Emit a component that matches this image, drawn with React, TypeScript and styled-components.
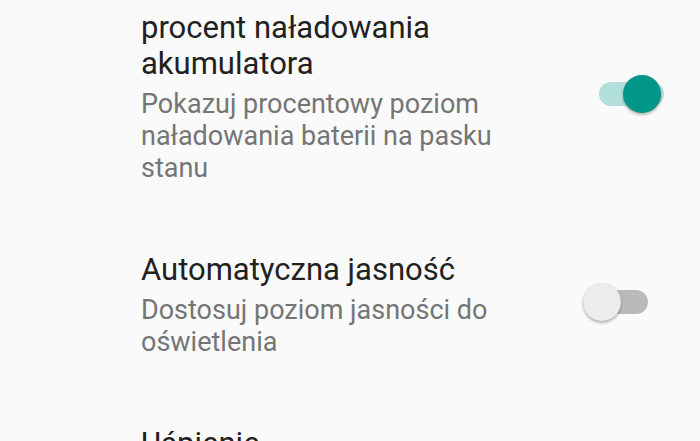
import styled, { createGlobalStyle } from "styled-components";

const GlobalStyle = createGlobalStyle`
  html, body {
    margin: 0;
    padding: 0;
    background: #fafafa;
    overflow: hidden;
  }
  body {
    font-family: Roboto, "Noto Sans", sans-serif;
  }
`;

const Screen = styled.div`
  width: 700px;
  height: 441px;
  overflow: hidden;
  background: #fafafa;
`;

const List = styled.div`
  display: flex;
  flex-direction: column;
  margin-top: -24px;
`;

const Item = styled.div`
  display: flex;
  align-items: center;
  gap: 24px;
  padding: 34px 36px 34px 141px;
`;

const Texts = styled.div`
  flex: 1;
  display: flex;
  flex-direction: column;
  gap: 6px;
`;

const Title = styled.div`
  font-size: 31px;
  line-height: 36px;
  color: #212121;
`;

const Summary = styled.div`
  font-size: 27px;
  line-height: 32px;
  color: #757575;
  max-width: 370px;
`;

const SwitchBox = styled.div`
  position: relative;
  width: 81px;
  height: 38px;
  margin-bottom: 6px;
  flex-shrink: 0;
`;

const Track = styled.div<{ $on: boolean }>`
  position: absolute;
  top: 7px;
  left: ${(p) => (p.$on ? "16px" : "0")};
  width: 65px;
  height: 24px;
  border-radius: 12px;
  background: ${(p) => (p.$on ? "#b2dfdb" : "#bababa")};
`;

const Thumb = styled.div<{ $on: boolean }>`
  position: absolute;
  top: 0;
  left: ${(p) => (p.$on ? "40px" : "0")};
  width: 38px;
  height: 38px;
  border-radius: 50%;
  background: ${(p) => (p.$on ? "#009688" : "#ececec")};
  box-shadow: 0 2px 3px rgba(0, 0, 0, 0.28), 0 0 1px rgba(0, 0, 0, 0.12);
`;

function Switch({ on }: { on: boolean }) {
  return (
    <SwitchBox>
      <Track $on={on} />
      <Thumb $on={on} />
    </SwitchBox>
  );
}

const prefs: { title: string; summary?: string; on?: boolean }[] = [
  {
    title: "procent naładowania akumulatora",
    summary: "Pokazuj procentowy poziom naładowania baterii na pasku stanu",
    on: true,
  },
  {
    title: "Automatyczna jasność",
    summary: "Dostosuj poziom jasności do oświetlenia",
    on: false,
  },
  {
    title: "Uśpienie",
  },
];

export default function App() {
  return (
    <Screen>
      <GlobalStyle />
      <List>
        {prefs.map((p) => (
          <Item key={p.title}>
            <Texts>
              <Title>{p.title}</Title>
              {p.summary && <Summary>{p.summary}</Summary>}
            </Texts>
            {p.on !== undefined && <Switch on={p.on} />}
          </Item>
        ))}
      </List>
    </Screen>
  );
}
